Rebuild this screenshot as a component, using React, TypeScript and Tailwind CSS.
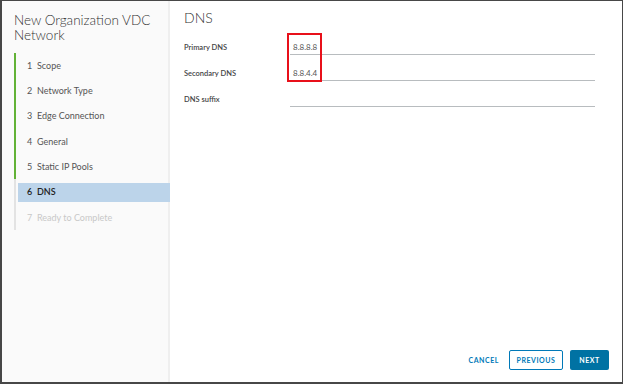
import React from "react";

const steps = [
  { n: 1, label: "Scope", state: "done" },
  { n: 2, label: "Network Type", state: "done" },
  { n: 3, label: "Edge Connection", state: "done" },
  { n: 4, label: "General", state: "done" },
  { n: 5, label: "Static IP Pools", state: "done" },
  { n: 6, label: "DNS", state: "current" },
  { n: 7, label: "Ready to Complete", state: "todo" },
];

const fields = [
  { label: "Primary DNS", value: "8.8.8.8" },
  { label: "Secondary DNS", value: "8.8.4.4" },
  { label: "DNS suffix", value: "" },
];

export default function App() {
  return (
    <div
      className="w-[623px] h-[384px] flex border-l-2 border-t border-r border-b-2 border-[#474747] bg-white text-[#333]"
      style={{ fontFamily: "Lato, 'Open Sans', sans-serif" }}
    >
      {/* Sidebar */}
      <div className="w-[168px] shrink-0 bg-[#fafafa] border-r-2 border-[#efefef] flex flex-col">
        <div className="pl-[12px] pt-[12px] text-[13.5px] leading-[15px] font-light text-[#333]">
          New Organization VDC Network
        </div>
        <div className="ml-[12px] mt-[10px] flex flex-col">
          {steps.map((s) => (
            <div
              key={s.n}
              className={
                "h-[25.3px] flex items-center border-l-2 " +
                (s.state === "done" ? "border-[#62b236]" : "border-[#e3e3e3]")
              }
            >
              <div
                className={
                  "ml-[2px] -mr-[2px] flex-1 h-[19px] flex items-center pl-[9px] text-[9px] " +
                  (s.state === "current"
                    ? "bg-[#bcd4ea] font-semibold text-[#222]"
                    : s.state === "todo"
                    ? "text-[#c8c8c8]"
                    : "text-[#555]")
                }
              >
                <span className="w-[10px]">{s.n}</span>
                <span>{s.label}</span>
              </div>
            </div>
          ))}
        </div>
      </div>

      {/* Content */}
      <div className="flex-1 flex flex-col pl-[14px] pr-[27px]">
        <div className="pt-[9px] text-[14px] leading-[16px] font-light text-[#333]">DNS</div>
        <div className="relative mt-[13px] flex flex-col gap-[10px]">
          {fields.map((f) => (
            <div key={f.label} className="flex items-end h-[16px]">
              <div className="w-[106px] text-[7.5px] font-semibold text-[#444] pb-[2px]">
                {f.label}
              </div>
              <div className="flex-1 h-[16px] border-b border-[#b8bcbf] pl-[3px] text-[8px] text-[#555] flex items-center">
                {f.value}
              </div>
            </div>
          ))}
          <div className="absolute left-[103px] top-[-6px] w-[35px] h-[49px] border-2 border-[#e8101a]" />
        </div>
        <div className="mt-auto mb-[12px] flex justify-end items-center gap-[7px] -mr-[14px]">
          <button className="h-[20px] px-[3px] text-[7px] font-bold tracking-[0.08em] text-[#0079b8]">
            CANCEL
          </button>
          <button className="h-[20px] w-[54px] border border-[#0079b8] rounded-[2px] text-[7px] font-bold tracking-[0.08em] text-[#0079b8] bg-white">
            PREVIOUS
          </button>
          <button className="h-[20px] w-[39px] rounded-[2px] bg-[#0072a3] text-[7px] font-bold tracking-[0.08em] text-white">
            NEXT
          </button>
        </div>
      </div>
    </div>
  );
}
